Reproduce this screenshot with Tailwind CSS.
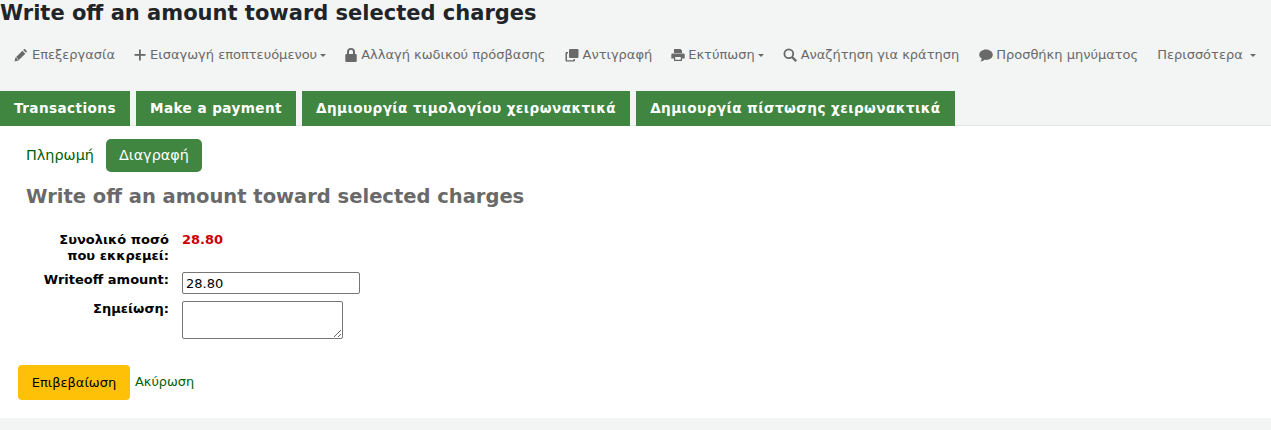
<!DOCTYPE html>
<html lang="en">

<head>
    <meta charset="UTF-8" />
    <title>Write off an amount toward selected charges</title>
    <script src="https://cdn.jsdelivr.net/npm/@tailwindcss/browser@4"></script>
</head>

<body class="bg-[#f3f4f4] font-['DejaVu_Sans',sans-serif] text-black h-[430px] overflow-hidden">

    <h1 class="text-[21px] leading-[25px] font-bold text-[#212529] h-[26px] pt-[1px]">Write off an amount toward selected charges</h1>

    <!-- toolbar -->
    <div class="flex items-center h-[20px] mt-[19px] pl-[14px] text-[13px] text-[#696969] whitespace-nowrap">
        <a class="flex items-center">
            <svg class="w-[13px] h-[13px] mr-[5px]" viewBox="0 0 24 24" fill="currentColor"><path d="M1 23l1.600-7L15.500 3.200l5.400 5.400L8 21.400zM17 1.700l1.300-1.200c.6-.6 1.500-.6 2.100 0l3.100 3.100c.6.6.6 1.500 0 2.100l-1.200 1.300z" /><path d="M3.500 15.500l2.500 1v2.500l2 .5" fill="none" stroke="#f3f4f4" stroke-width="1" /></svg>
            Επεξεργασία
        </a>
        <a class="flex items-center ml-[19px]">
            <svg class="w-[12px] h-[12px] mr-[4px]" viewBox="0 0 12 12" fill="currentColor"><rect x="5" y="0.500" width="1.800" height="11" /><rect x="0.500" y="5" width="11" height="1.800" /></svg>
            Εισαγωγή εποπτευόμενου
            <span class="ml-[3px] border-x-[3px] border-t-[3px] border-x-transparent border-t-[#696969]"></span>
        </a>
        <a class="flex items-center ml-[19px]">
            <svg class="w-[12px] h-[14px] mr-[4px]" viewBox="0 0 12 14" fill="currentColor"><path d="M2 6V4a4 4 0 0 1 8 0v2h.7a1 1 0 0 1 1 1v6a1 1 0 0 1-1 1H1.300a1 1 0 0 1-1-1V7a1 1 0 0 1 1-1zM4 6h4V4a2 2.200 0 0 0-4 0z" /></svg>
            Αλλαγή κωδικού πρόσβασης
        </a>
        <a class="flex items-center ml-[19px]">
            <svg class="w-[14px] h-[14px] mr-[4px]" viewBox="0 0 14 14" fill="currentColor"><rect x="4" y="1" width="9.500" height="9" rx="1.200" /><path d="M3 4H1.500A1 1 0 0 0 .5 5v7.500a1 1 0 0 0 1 1H9a1 1 0 0 0 1-1V11H8.500v1.200H2V5.500h1z" /></svg>
            Αντιγραφή
        </a>
        <a class="flex items-center ml-[19px]">
            <svg class="w-[14px] h-[14px] mr-[3px]" viewBox="0 0 14 14" fill="currentColor"><path d="M3 1h6.500L11 2.500V5H3zM1.500 5.500h11a1.200 1.200 0 0 1 1.200 1.200V10.500H11V13H3v-2.500H.3V6.700a1.200 1.200 0 0 1 1.200-1.200zM4.200 9v2.800h5.600V9z" /></svg>
            Εκτύπωση
            <span class="ml-[3px] border-x-[3px] border-t-[3px] border-x-transparent border-t-[#696969]"></span>
        </a>
        <a class="flex items-center ml-[19px]">
            <svg class="w-[14px] h-[14px] mr-[4px]" viewBox="0 0 14 14" fill="none" stroke="currentColor" stroke-width="1.800"><circle cx="5.800" cy="5.800" r="4.400" /><path d="M9 9l4.200 4.200" stroke-width="2.300" /></svg>
            Αναζήτηση για κράτηση
        </a>
        <a class="flex items-center ml-[20px]">
            <svg class="w-[14px] h-[13px] mr-[3px]" viewBox="0 0 14 13" fill="currentColor"><path d="M7 .5c3.700 0 6.800 2.300 6.800 5.200S10.700 10.900 7 10.900c-.6 0-1.100 0-1.600-.1C4.400 11.700 3 12.400 1.300 12.500c.8-.9 1.400-1.800 1.500-3C1.200 8.600.2 7.300.2 5.700.2 2.800 3.300.5 7 .5z" /></svg>
            Προσθήκη μηνύματος
        </a>
        <a class="flex items-center ml-[19px]">
            Περισσότερα
            <span class="ml-[7px] border-x-[3px] border-t-[3px] border-x-transparent border-t-[#696969]"></span>
        </a>
    </div>

    <!-- tabs -->
    <div class="relative flex gap-[6px] mt-[26px] -mb-[1px] text-[13.6px] leading-[35px] font-bold text-white tracking-[0.42px] whitespace-nowrap">
        <a class="h-[35px] px-[14px] bg-[#408540]">Transactions</a>
        <a class="h-[35px] px-[14px] bg-[#408540]">Make a payment</a>
        <a class="h-[35px] px-[14px] bg-[#408540]">Δημιουργία τιμολογίου χειρωνακτικά</a>
        <a class="h-[35px] px-[14px] bg-[#408540]">Δημιουργία πίστωσης χειρωνακτικά</a>
    </div>

    <main class="bg-white h-[293px] border-t border-[#e6e6e6] pt-[13px]">
        <div class="flex items-center pl-[13px] text-[14.4px]">
            <a class="h-[33px] leading-[33px] pl-[13px] pr-[12px] text-[#006100]">Πληρωμή</a>
            <a class="h-[33px] leading-[33px] px-[13px] bg-[#408540] text-white rounded-[5px]">Διαγραφή</a>
        </div>

        <h2 class="ml-[26px] mt-[13px] text-[19.5px] leading-[24px] font-bold text-[#696969]">Write off an amount toward selected charges</h2>

        <div class="mt-[23px] text-[13px] leading-[16px]">
            <div class="flex">
                <div class="w-[169px] text-right font-bold">Συνολικό ποσό<br />που εκκρεμεί:</div>
                <div class="ml-[13px] font-bold text-[#cc0000]">28.80</div>
            </div>
            <div class="flex mt-[8px]">
                <label class="w-[169px] text-right font-bold leading-[15px]">Writeoff amount:</label>
                <input type="text" value="28.80" class="ml-[13px] w-[178px] h-[22px] px-[3px] bg-white border border-[#767676] rounded-[2px] text-[13px] outline-none" />
            </div>
            <div class="flex mt-[7px]">
                <label class="w-[169px] text-right font-bold leading-[15px]">Σημείωση:</label>
                <textarea class="block ml-[13px] w-[161px] h-[38px] bg-white border border-[#767676] rounded-[2px] outline-none"></textarea>
            </div>
        </div>

        <div class="flex items-center mt-[26px] ml-[18px] text-[13px]">
            <button class="h-[35px] w-[112px] bg-[#ffc107] rounded-[4px] text-black">Επιβεβαίωση</button>
            <a class="ml-[5px] pb-[2px] text-[12.9px] text-[#006100]">Ακύρωση</a>
        </div>
    </main>

</body>

</html>
